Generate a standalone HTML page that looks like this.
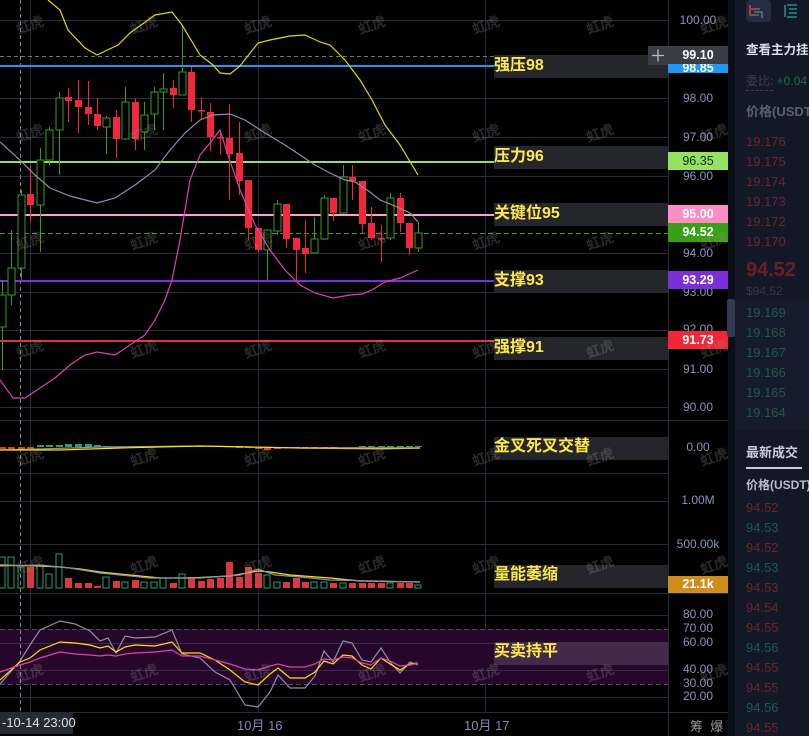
<!DOCTYPE html>
<html><head><meta charset="utf-8">
<style>
html,body{margin:0;padding:0;background:#000;}
body{width:809px;height:736px;position:relative;overflow:hidden;font-family:"Liberation Sans","Noto Sans CJK SC",sans-serif;}
.t{position:absolute;white-space:nowrap;}
.ax{position:absolute;left:668px;width:60px;text-align:center;font-size:12px;color:#8a94b8;}
.tag{position:absolute;left:668px;width:60px;height:18px;line-height:18px;text-align:center;font-size:12.5px;font-weight:bold;color:#fff;}
.lbl{position:absolute;left:494px;width:174px;height:23px;background:#25262b;}
.lt{position:absolute;left:494px;font-size:16px;font-weight:bold;color:#ffe94a;line-height:23px;}
.wm{position:absolute;font-size:14px;color:rgba(150,150,150,0.28);transform:rotate(-20deg);font-weight:bold;}
#rp{position:absolute;left:735px;top:0;width:74px;height:736px;background:#131826;overflow:hidden;}
#rp .t{font-size:13px;}
</style></head><body>
<svg id="ch" width="809" height="736" style="position:absolute;left:0;top:0">
<rect x="728" y="0" width="7" height="736" fill="#0b0e16"/>
<g stroke="#262b3d" stroke-width="1">
<line x1="0" y1="20.5" x2="668" y2="20.5"/><line x1="0" y1="98.5" x2="668" y2="98.5"/>
<line x1="0" y1="137.5" x2="668" y2="137.5"/><line x1="0" y1="176.5" x2="668" y2="176.5"/>
<line x1="0" y1="253.5" x2="668" y2="253.5"/><line x1="0" y1="292.5" x2="668" y2="292.5"/>
<line x1="0" y1="330.5" x2="668" y2="330.5"/><line x1="0" y1="369.5" x2="668" y2="369.5"/>
<line x1="0" y1="407.5" x2="668" y2="407.5"/>
<line x1="0" y1="420.5" x2="728" y2="420.5"/><line x1="0" y1="473.5" x2="668" y2="473.5"/>
<line x1="0" y1="501.5" x2="668" y2="501.5"/><line x1="0" y1="544.5" x2="668" y2="544.5"/>
<line x1="0" y1="593.5" x2="728" y2="593.5"/><line x1="0" y1="615.5" x2="668" y2="615.5"/>
<line x1="0" y1="643.5" x2="668" y2="643.5"/><line x1="0" y1="670.5" x2="668" y2="670.5"/>
<line x1="0" y1="697.5" x2="668" y2="697.5"/><line x1="0" y1="712.5" x2="728" y2="712.5"/>
<line x1="30.5" y1="0" x2="30.5" y2="712"/><line x1="258.5" y1="0" x2="258.5" y2="712"/>
<line x1="485.5" y1="0" x2="485.5" y2="712"/><line x1="668.5" y1="0" x2="668.5" y2="736"/>
</g>
<rect x="0" y="629" width="668" height="55" fill="#26062a"/>
<line x1="0" y1="629.5" x2="668" y2="629.5" stroke="#4a4a60" stroke-dasharray="5,3"/>
<line x1="0" y1="684.5" x2="668" y2="684.5" stroke="#4a4a60" stroke-dasharray="5,3"/>
<line x1="0" y1="643.5" x2="668" y2="643.5" stroke="#3a2a48"/>
<line x1="0" y1="670.5" x2="668" y2="670.5" stroke="#3a2a48"/>
<line x1="20.5" y1="0" x2="20.5" y2="712" stroke="#888" stroke-dasharray="4,3"/>
<line x1="0" y1="56.5" x2="668" y2="56.5" stroke="#777" stroke-dasharray="4,3"/>
<rect x="0" y="65" width="668" height="2" fill="#2196f3"/>
<rect x="0" y="161" width="668" height="2" fill="#96e064"/>
<rect x="0" y="214" width="668" height="2" fill="#ff9ecf"/>
<line x1="0" y1="233.5" x2="668" y2="233.5" stroke="#38a014" stroke-dasharray="5,3"/>
<rect x="0" y="280" width="668" height="2" fill="#7b2fd8"/>
<rect x="0" y="340" width="668" height="2" fill="#e8303a"/>
<g id="cand"></g>
<g id="lines" fill="none" stroke-width="1.2"></g>
<rect x="0" y="712" width="73" height="22" fill="#262a35"/>
</svg>

<div class="lbl" style="top:55px"></div><div class="lt" style="top:54px">强压98</div>
<div class="lbl" style="top:146px"></div><div class="lt" style="top:145px">压力96</div>
<div class="lbl" style="top:203px"></div><div class="lt" style="top:202px">关键位95</div>
<div class="lbl" style="top:270px"></div><div class="lt" style="top:269px">支撑93</div>
<div class="lbl" style="top:337px"></div><div class="lt" style="top:336px">强撑91</div>
<div class="lbl" style="top:437px"></div><div class="lt" style="top:435px">金叉死叉交替</div>
<div class="lbl" style="top:565px"></div><div class="lt" style="top:563px">量能萎缩</div>
<div class="lbl" style="top:642px;background:#43294a"></div><div class="lt" style="top:640px">买卖持平</div>

<svg style="position:absolute;left:648px;top:46px" width="20" height="19"><rect width="20" height="19" fill="#3a3d47"/><path d="M4 9.5h12M10 3.5v12" stroke="#bbb" stroke-width="1.3"/></svg>

<div class="ax" style="top:13px">100.00</div>
<div class="ax" style="top:91px">98.00</div>
<div class="ax" style="top:130px">97.00</div>
<div class="ax" style="top:169px">96.00</div>
<div class="ax" style="top:246px">94.00</div>
<div class="ax" style="top:285px">93.00</div>
<div class="ax" style="top:322px">92.00</div>
<div class="ax" style="top:362px">91.00</div>
<div class="ax" style="top:400px">90.00</div>
<div class="ax" style="top:440px">0.00</div>
<div class="ax" style="top:493px">1.00M</div>
<div class="ax" style="top:537px">500.00k</div>
<div class="ax" style="top:607px">80.00</div>
<div class="ax" style="top:621px">70.00</div>
<div class="ax" style="top:635px">60.00</div>
<div class="ax" style="top:662px">40.00</div>
<div class="ax" style="top:676px">30.00</div>
<div class="ax" style="top:689px">20.00</div>

<div class="tag" style="top:64px;height:9px;line-height:9px;background:#2196f3;overflow:hidden">98.85</div>
<div class="tag" style="top:46px;background:#3a3d47">99.10</div>
<div class="tag" style="top:152px;background:#96e064;color:#1a2a10;font-weight:normal">96.35</div>
<div class="tag" style="top:205px;background:#ff8cc6">95.00</div>
<div class="tag" style="top:223px;height:19px;background:#38a014">94.52</div>
<div class="tag" style="top:271px;background:#7b2fd8">93.29</div>
<div class="tag" style="top:331px;background:#f2253a">91.73</div>
<div class="tag" style="top:576px;height:17px;line-height:17px;background:#d08c1a">21.1k</div>

<div class="t" style="left:2px;top:715px;font-size:13px;color:#e0e0e0">-10-14 23:00</div>
<div class="t" style="left:237px;top:715px;font-size:13px;color:#7e8ab8">10月 16</div>
<div class="t" style="left:464px;top:715px;font-size:13px;color:#7e8ab8">10月 17</div>
<div class="t" style="left:690px;top:716px;font-size:13px;color:#999">筹&nbsp;&nbsp;爆</div>

<div class="wm" style="left:16px;top:15px">虹虎</div><div class="wm" style="left:130px;top:15px">虹虎</div><div class="wm" style="left:244px;top:15px">虹虎</div><div class="wm" style="left:358px;top:15px">虹虎</div><div class="wm" style="left:472px;top:15px">虹虎</div><div class="wm" style="left:586px;top:15px">虹虎</div><div class="wm" style="left:700px;top:15px">虹虎</div>
<div class="wm" style="left:16px;top:123px">虹虎</div><div class="wm" style="left:130px;top:123px">虹虎</div><div class="wm" style="left:244px;top:123px">虹虎</div><div class="wm" style="left:358px;top:123px">虹虎</div><div class="wm" style="left:472px;top:123px">虹虎</div><div class="wm" style="left:586px;top:123px">虹虎</div><div class="wm" style="left:700px;top:123px">虹虎</div>
<div class="wm" style="left:16px;top:231px">虹虎</div><div class="wm" style="left:130px;top:231px">虹虎</div><div class="wm" style="left:244px;top:231px">虹虎</div><div class="wm" style="left:358px;top:231px">虹虎</div><div class="wm" style="left:472px;top:231px">虹虎</div><div class="wm" style="left:586px;top:231px">虹虎</div><div class="wm" style="left:700px;top:231px">虹虎</div>
<div class="wm" style="left:16px;top:339px">虹虎</div><div class="wm" style="left:130px;top:339px">虹虎</div><div class="wm" style="left:244px;top:339px">虹虎</div><div class="wm" style="left:358px;top:339px">虹虎</div><div class="wm" style="left:472px;top:339px">虹虎</div><div class="wm" style="left:586px;top:339px">虹虎</div><div class="wm" style="left:700px;top:339px">虹虎</div>
<div class="wm" style="left:16px;top:447px">虹虎</div><div class="wm" style="left:130px;top:447px">虹虎</div><div class="wm" style="left:244px;top:447px">虹虎</div><div class="wm" style="left:358px;top:447px">虹虎</div><div class="wm" style="left:472px;top:447px">虹虎</div><div class="wm" style="left:586px;top:447px">虹虎</div><div class="wm" style="left:700px;top:447px">虹虎</div>
<div class="wm" style="left:16px;top:555px">虹虎</div><div class="wm" style="left:130px;top:555px">虹虎</div><div class="wm" style="left:244px;top:555px">虹虎</div><div class="wm" style="left:358px;top:555px">虹虎</div><div class="wm" style="left:472px;top:555px">虹虎</div><div class="wm" style="left:586px;top:555px">虹虎</div><div class="wm" style="left:700px;top:555px">虹虎</div>
<div class="wm" style="left:16px;top:663px">虹虎</div><div class="wm" style="left:130px;top:663px">虹虎</div><div class="wm" style="left:244px;top:663px">虹虎</div><div class="wm" style="left:358px;top:663px">虹虎</div><div class="wm" style="left:472px;top:663px">虹虎</div><div class="wm" style="left:586px;top:663px">虹虎</div><div class="wm" style="left:700px;top:663px">虹虎</div>

<div style="position:absolute;left:727px;top:299px;width:8px;height:38px;background:#333a55;border-radius:2px"></div>
<div id="rp">
<div style="position:absolute;left:11px;top:0;width:25px;height:22px;background:#262d40;border-radius:4px"></div>
<svg style="position:absolute;left:0;top:0" width="74" height="30"><path d="M15 5v10h9M16 9h9" stroke="#e04a55" stroke-width="1.3" fill="none"/><path d="M19 12h8v6" stroke="#26a69a" stroke-width="1.3" fill="none"/><path d="M50 5v12M52 5h10M54 9h8M54 13h8M52 17h10" stroke="#26a69a" stroke-width="1.3" fill="none"/></svg>
<div class="t" style="left:11px;top:39px;color:#dde;font-weight:bold;font-size:12.5px">查看主力挂单</div>
<div class="t" style="left:11px;top:72px;color:#3a4150;font-size:12px">委比: <span style="color:#1f6b4a">+0.04</span></div>
<div style="position:absolute;left:11px;top:90px;width:27px;border-top:1px dashed #3a4150"></div>
<div class="t" style="left:11px;top:101px;color:#5a6170;font-weight:bold;font-size:13px">价格(USDT)</div>
<div class="t" style="left:11px;top:134px;color:#6a2530">19.176</div>
<div class="t" style="left:11px;top:154px;color:#6a2530">19.175</div>
<div class="t" style="left:11px;top:174px;color:#6a2530">19.174</div>
<div class="t" style="left:11px;top:194px;color:#6a2530">19.173</div>
<div class="t" style="left:11px;top:214px;color:#6a2530">19.172</div>
<div class="t" style="left:11px;top:234px;color:#6a2530">19.170</div>
<div class="t" style="left:11px;top:259px;color:#6a1f28;font-size:20px;font-weight:bold">94.52</div>
<div class="t" style="left:11px;top:284px;color:#333a48;font-size:12px">$94.52</div>
<div style="position:absolute;left:0;top:300px;width:74px;height:130px;background:#161b2b"></div>
<div class="t" style="left:11px;top:305px;color:#1d5a4a">19.169</div>
<div class="t" style="left:11px;top:325px;color:#1d5a4a">19.168</div>
<div class="t" style="left:11px;top:345px;color:#1d5a4a">19.167</div>
<div class="t" style="left:11px;top:365px;color:#1d5a4a">19.166</div>
<div class="t" style="left:11px;top:385px;color:#1d5a4a">19.165</div>
<div class="t" style="left:11px;top:405px;color:#1d5a4a">19.164</div>
<div class="t" style="left:11px;top:442px;color:#ccd;font-weight:bold;font-size:13px">最新成交</div>
<div style="position:absolute;left:11px;top:467px;width:56px;height:2px;background:#ccd"></div>
<div class="t" style="left:11px;top:476px;color:#bbc;font-weight:bold;font-size:12px">价格(USDT)</div>
<div class="t" style="left:11px;top:500px;color:#6a2530">94.52</div>
<div class="t" style="left:11px;top:520px;color:#1d5a4a">94.53</div>
<div class="t" style="left:11px;top:540px;color:#6a2530">94.52</div>
<div class="t" style="left:11px;top:560px;color:#1d5a4a">94.53</div>
<div class="t" style="left:11px;top:580px;color:#6a2530">94.53</div>
<div class="t" style="left:11px;top:600px;color:#6a2530">94.54</div>
<div class="t" style="left:11px;top:620px;color:#6a2530">94.55</div>
<div class="t" style="left:11px;top:640px;color:#1d5a4a">94.56</div>
<div class="t" style="left:11px;top:660px;color:#6a2530">94.55</div>
<div class="t" style="left:11px;top:680px;color:#6a2530">94.55</div>
<div class="t" style="left:11px;top:700px;color:#1d5a4a">94.56</div>
<div class="t" style="left:11px;top:720px;color:#6a2530">94.55</div>
</div>

<script>
var C=[[2,'g',295,327,280,370],[11,'g',268,295,230,305],[21,'g',195,268,190,280],[30,'r',194,205,165,222],[40,'g',160,205,148,252],[49,'g',130,160,127,165],[59,'g',98,130,92,175],[68,'r',97,101,88,122],[78,'r',100,107,80,133],[88,'r',107,114,81,125],[97,'r',114,126,98,130],[106,'g',118,127,116,154],[116,'r',117,139,110,158],[125,'g',102,139,87,140],[135,'r',102,139,98,150],[144,'g',115,132,102,150],[154,'g',92,114,87,130],[163,'g',89,92,73,130],[173,'r',88,95,80,108],[182,'g',72,95,25,95],[191,'r',72,110,67,122],[201,'r',110,111,97,120],[210,'r',112,137,103,151],[220,'r',137,138,133,155],[229,'r',138,154,104,200],[239,'r',153,181,122,195],[248,'r',180,228,180,240],[258,'r',228,250,228,252],[267,'g',230,250,230,280],[277,'g',204,231,200,235],[286,'r',204,239,204,248],[296,'r',238,250,238,280],[305,'r',248,254,220,273],[314,'g',239,253,217,253],[324,'g',198,239,195,240],[333,'r',198,213,198,221],[343,'g',177,213,165,213],[352,'r',177,181,165,200],[362,'r',181,224,181,233],[371,'r',223,238,207,240],[381,'r',238,239,225,262],[390,'g',198,238,193,240],[400,'r',198,223,193,232],[409,'r',223,248,223,255],[418,'g',233,248,222,252]];
var V=[557,557,567,567,565,574,554,578,583,583,586,577,581,582,580,582,582,578,583,574,577,581,579,578,562,577,567,573,575,582,582,578,582,582,582,583,583,583,583,583,583,583,583,583,585];
var s='';
C.forEach(function(c,i){var x=c[0],g=c[1]=='g',col=g?'#3a9c1c':'#f0283a';
s+='<line x1="'+(x+.5)+'" y1="'+c[4]+'" x2="'+(x+.5)+'" y2="'+c[5]+'" stroke="'+col+'"/>';
var h=Math.max(1.5,c[3]-c[2]);
if(g)s+='<rect x="'+(x-3)+'" y="'+c[2]+'" width="7" height="'+h+'" fill="#000" stroke="'+col+'"/>';
else s+='<rect x="'+(x-3)+'" y="'+c[2]+'" width="7" height="'+h+'" fill="'+col+'"/>';
var vt=V[i],vc=g?'#22a07a':'#d8383e';
if(g)s+='<rect x="'+(x-3)+'" y="'+vt+'" width="6" height="'+(588-vt)+'" fill="none" stroke="'+vc+'"/>';
else s+='<rect x="'+(x-3)+'" y="'+vt+'" width="7" height="'+(588-vt)+'" fill="'+vc+'"/>';
var mh=[2,2,2,2,-2,-2,-2,-3,-3,-3,-2,-1,0,0,0,0,0,-1,-1,0,0,0,0,0,0,1,1,2,3,2,1,1,1,1,1,1,0,0,-1,-1,-1,-1,-1,-1,-1][i];
if(mh!=0)s+='<rect x="'+(x-3)+'" y="'+(mh>0?447:447+mh)+'" width="7" height="'+Math.abs(mh)+'" fill="'+(mh>0?'#d8383e':'#22a07a')+'"/>';
});
document.getElementById('cand').innerHTML=s;
function P(pts,col,w){return '<polyline points="'+pts+'" stroke="'+col+'" stroke-width="'+(w||1.2)+'"/>';}
var L='';
L+=P('48,0 60,10 68,30 85,48 97,55 118,45 130,33 155,15 172,12 182,25 200,55 213,65 220,73 230,74 240,66 258,43 270,40 290,36 305,35 320,42 330,45 345,60 360,80 372,100 385,125 400,145 418,175','#e8d800');
L+=P('0,142 20,160 35,175 50,188 70,196 97,203 115,198 135,185 155,170 170,150 185,133 200,120 213,115 230,114 245,120 265,133 285,145 300,155 315,165 330,173 345,180 355,182 370,192 380,200 395,206 410,213 418,222','#8a90aa');
L+=P('0,380 13,398 25,398 40,388 55,378 70,365 85,355 97,352 115,355 130,345 145,335 155,320 165,300 172,280 180,240 190,180 200,155 210,143 220,130 228,155 240,190 255,225 270,250 285,270 300,285 315,293 333,298 350,295 362,294 372,290 385,282 400,278 418,270','#e040b0');
L+=P('0,450 40,449 100,447 200,446 250,447 300,448 380,449 420,448','#8a90aa');
L+=P('0,450 60,450 120,448 200,446 250,447 300,448 380,448 420,448','#ffe000');
L+=P('0,565 40,566 60,567 80,569 100,572 130,575 160,578 190,578 230,576 258,571 270,572 290,575 330,578 360,581 420,582','#ffe000');
L+=P('0,566 40,565 70,568 100,573 120,575 150,578 200,578 240,575 258,569 275,575 300,577 330,580 420,582','#8a90aa');
L+=P('0,684 20,661 30,645 40,630 60,621 75,624 90,631 100,641 108,638 116,653 125,636 135,638 155,637 172,630 182,654 200,658 215,672 230,680 245,705 258,707 270,692 278,675 290,688 305,688 315,676 324,651 333,662 343,641 352,643 362,660 371,662 381,648 390,662 400,673 410,662 418,665','#8a90aa');
L+=P('0,680 20,662 30,658 40,650 60,642 75,643 90,645 100,648 108,646 116,652 125,647 135,645 155,646 172,642 182,653 200,653 215,660 230,670 245,682 258,685 270,674 278,668 290,678 305,678 315,672 324,661 333,664 343,655 352,656 362,665 371,669 381,658 390,664 400,670 410,664 418,663','#ffe000');
L+=P('0,672 20,665 30,662 40,658 60,652 75,654 90,655 100,656 108,655 116,656 125,654 135,653 155,652 172,650 182,656 200,656 215,660 230,664 245,669 258,670 270,666 278,664 290,667 305,667 315,664 324,659 333,660 343,657 352,658 362,663 371,665 381,658 390,661 400,666 410,665 418,663','#e040b0');
document.getElementById('lines').innerHTML=L;
</script>
</body></html>
